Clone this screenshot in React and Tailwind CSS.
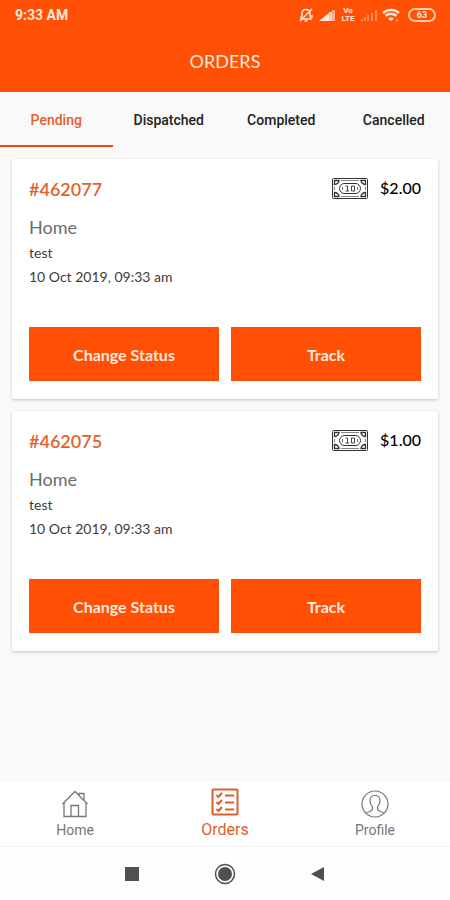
import React, { useState } from "react";

const tabs = ["Pending", "Dispatched", "Completed", "Cancelled"];

const orders = [
  {
    id: "#462077",
    place: "Home",
    note: "test",
    date: "10 Oct 2019, 09:33 am",
    price: "$2.00",
  },
  {
    id: "#462075",
    place: "Home",
    note: "test",
    date: "10 Oct 2019, 09:33 am",
    price: "$1.00",
  },
];

const MutedBellIcon = () => (
  <svg width="16" height="16" viewBox="0 0 16 16" fill="none" stroke="currentColor" strokeWidth="1.5">
    <path d="M3 12V10.500L4 9V6.500C4 4 5.700 2.500 8 2.500S12 4 12 6.500V9L13 10.500V12Z" />
    <path d="M6.500 14H9.500" />
    <path d="M2 14L14 2" />
    <path d="M14 8V11" />
  </svg>
);

const SignalIcon = () => (
  <svg width="18" height="13" viewBox="0 0 18 13" fill="currentColor">
    <path d="M1 12L11 4V12Z" />
    <rect x="11" y="3" width="3" height="9" opacity="0.8" />
    <rect x="14" y="1" width="3" height="11" opacity="0.6" />
  </svg>
);

const WeakSignalIcon = () => (
  <svg width="18" height="13" viewBox="0 0 18 13" fill="currentColor" opacity="0.4">
    <rect x="1" y="10" width="2" height="2" />
    <rect x="4" y="8" width="2" height="4" />
    <rect x="7" y="6" width="2" height="6" />
    <rect x="11" y="4" width="2" height="8" />
    <rect x="15" y="1" width="2" height="11" />
  </svg>
);

const WifiIcon = () => (
  <svg width="18" height="14" viewBox="0 0 18 14" fill="none" stroke="currentColor" strokeWidth="2.400">
    <path d="M1 5C5.500 .8 12.500 .8 17 5" />
    <path d="M3.500 7.800C6.700 5 11.300 5 14.500 7.800" />
    <path d="M6 10.500C7.800 9 10.200 9 12 10.500L9 13Z" fill="currentColor" stroke="none" />
    <path d="M14 12.500H16" strokeWidth="1.500" opacity="0.7" />
  </svg>
);

const CashIcon = () => (
  <svg
    width="36"
    height="21"
    viewBox="0 0 36 21"
    fill="none"
    stroke="#333"
    strokeWidth="1"
    aria-label="Cash"
  >
    <rect x="0.500" y="0.500" width="35" height="20" rx="1" />
    <path d="M2.500 6.500V2.500H7C7 4.500 5 6.500 2.500 6.500ZM33.500 6.500V2.500H29C29 4.500 31 6.500 33.500 6.500ZM2.500 14.500V18.500H7C7 16.500 5 14.500 2.500 14.500ZM33.500 14.500V18.500H29C29 16.500 31 14.500 33.500 14.500Z" strokeWidth="1.300" />
    <path d="M9 2.500H27M9 18.500H27M2.500 9V12M33.500 9V12" strokeWidth="0.600" />
    <path d="M12 5.500H24C26 5.500 28.500 8 28.500 10.500S26 15.500 24 15.500H12C10 15.500 7.500 13 7.500 10.500S10 5.500 12 5.500Z" />
    <path d="M13.500 8H15.500V13M13.500 13H17M19.500 8H22.500V13H19.500Z" strokeWidth="0.900" />
    <path d="M10.500 9V12M25.500 9V12" strokeWidth="0.700" />
  </svg>
);

const HomeIcon = () => (
  <svg width="28" height="28" viewBox="0 0 28 28" fill="none" stroke="currentColor" strokeWidth="1.300">
    <path d="M1.500 14L14 1.500L26.500 14" />
    <path d="M3 13V26.500H25V13" />
    <path d="M18 5V3.500H23V10" />
    <path d="M10 26.500V15.500H17.500V26.500" />
  </svg>
);

const OrdersIcon = () => (
  <svg width="28" height="28" viewBox="0 0 28 28" fill="none" stroke="currentColor">
    <rect x="1.500" y="1.500" width="25" height="25" rx="1" strokeWidth="2" />
    <path d="M5.500 7L7.500 9L11 5M5.500 14L7.500 16L11 12M5.500 21L7.500 23L11 19" strokeWidth="2" />
    <path d="M14 7.500H23M14 14.500H23M14 21.500H23" strokeWidth="2" />
  </svg>
);

const ProfileIcon = () => (
  <svg width="28" height="28" viewBox="0 0 28 28" fill="none" stroke="currentColor" strokeWidth="1.200">
    <circle cx="14" cy="14" r="13" />
    <path d="M5 23C7 21.500 11.500 21.500 11.500 19V17C9.500 15 9 12.500 9 10.500C9 7.500 11 5.500 14 5.500S19 7.500 19 10.500C19 12.500 18.500 15 16.500 17V19C16.500 21.500 21 21.500 23 23" />
  </svg>
);

const OrderCard = ({ order }) => (
  <article className="rounded-xs bg-white px-[17px] pt-4 pb-[18px] shadow-[0_1px_3px_rgba(0,0,0,0.22)]">
    <div className="flex h-7 items-center justify-between">
      <h2 className="text-[18px] font-semibold text-[#e2622c]">{order.id}</h2>
      <div className="flex items-center gap-3 pb-0.5 text-black">
        <CashIcon />
        <span className="text-[16px] font-medium">{order.price}</span>
      </div>
    </div>
    <p className="mt-2.5 text-[18px] leading-7 text-[#6c6c6c]">{order.place}</p>
    <p className="text-[14px] leading-6 text-[#3c3c3c]">{order.note}</p>
    <p className="text-[14px] leading-6 text-[#3c3c3c]">{order.date}</p>
    <div className="mt-[38px] grid grid-cols-2 gap-3">
      <button className="h-[54px] bg-[#ff5005] pt-0.5 text-[16px] font-bold text-[#ffe9dc]">
        Change Status
      </button>
      <button className="h-[54px] bg-[#ff5005] pt-0.5 text-[16px] font-bold text-[#ffe9dc]">
        Track
      </button>
    </div>
  </article>
);

const App = () => {
  const [active, setActive] = useState("Pending");

  return (
    <div className="flex min-h-screen flex-col bg-[#f9f9f9] font-['Lato',sans-serif]">
      <header className="bg-[#ff5005] text-[#ffe9dc]">
        <div className="flex h-[30px] items-center justify-between pr-3.5 pl-[15px] font-['Roboto',sans-serif]">
          <span className="text-[14px] font-bold">9:33 AM</span>
          <div className="flex items-center gap-1">
            <MutedBellIcon />
            <SignalIcon />
            <div className="flex w-4 flex-col items-center text-[8px] font-bold">
              <span className="h-2 leading-2">Vo</span>
              <span className="h-2 leading-2">LTE</span>
            </div>
            <WeakSignalIcon />
            <WifiIcon />
            <span className="ml-1 flex h-[14px] w-7 items-center justify-center rounded-full border-2 border-[#ffc9a8] text-[9px] leading-[10px] font-bold">
              63
            </span>
          </div>
        </div>
        <h1 className="flex h-[62px] items-center justify-center text-[18px]">ORDERS</h1>
      </header>

      <div role="tablist" className="grid grid-cols-4 font-['Roboto',sans-serif]">
        {tabs.map((tab) => (
          <button
            key={tab}
            role="tab"
            aria-selected={tab === active}
            onClick={() => setActive(tab)}
            className={`h-[55px] border-b-2 pt-1 text-[14px] font-medium ${
              tab === active
                ? "border-[#ef4a0c] text-[#e2622c]"
                : "border-transparent text-[#222]"
            }`}
          >
            {tab}
          </button>
        ))}
      </div>

      <main className="flex flex-1 flex-col gap-3 px-3 py-3">
        {orders.map((order) => (
          <OrderCard key={order.id} order={order} />
        ))}
      </main>

      <nav className="grid h-[65px] grid-cols-3 border-b border-[#f3f3f3] bg-white font-['Roboto',sans-serif] text-[#777]">
        <a href="#home" className="flex flex-col items-center pt-2">
          <HomeIcon />
          <span className="text-[14px] leading-6">Home</span>
        </a>
        <a href="#orders" className="flex flex-col items-center pt-1.5 text-[#dc5e2a]">
          <OrdersIcon />
          <span className="text-[16px] leading-7">Orders</span>
        </a>
        <a href="#profile" className="flex flex-col items-center pt-2">
          <ProfileIcon />
          <span className="text-[14px] leading-6">Profile</span>
        </a>
      </nav>

      <div className="flex h-[53px] items-center justify-center gap-[72px] bg-[#fefefe] text-[#505050]">
        <button aria-label="Recent apps">
          <svg width="20" height="22" viewBox="0 0 20 22" fill="currentColor">
            <rect x="3" y="4" width="14" height="14" />
          </svg>
        </button>
        <button aria-label="Home screen">
          <svg width="22" height="22" viewBox="0 0 22 22" fill="currentColor">
            <circle cx="11" cy="11" r="9.500" fill="none" stroke="currentColor" strokeWidth="1.500" />
            <circle cx="11" cy="11" r="7" />
          </svg>
        </button>
        <button aria-label="Back">
          <svg width="20" height="22" viewBox="0 0 20 22" fill="currentColor">
            <path d="M3 11L16 4V18Z" />
          </svg>
        </button>
      </div>
    </div>
  );
};

export default App;
